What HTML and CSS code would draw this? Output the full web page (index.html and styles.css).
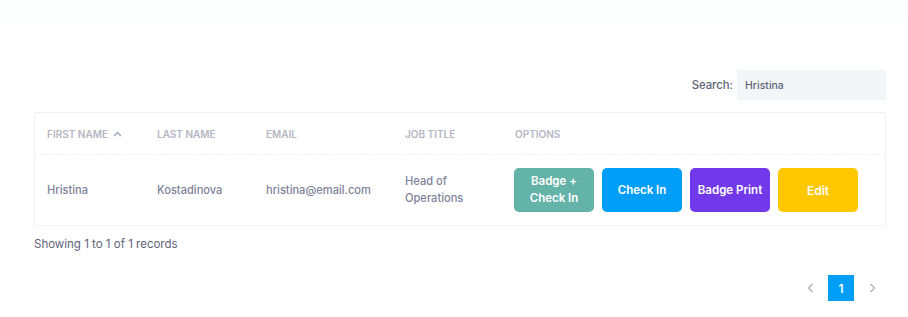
FILE: index.html
```html
<!DOCTYPE html>
<html lang="en">
<head>
  <meta charset="UTF-8">
  <meta name="viewport" content="width=device-width, initial-scale=1.0">
  <title>Attendees</title>
  <link rel="stylesheet" href="styles.css">
</head>
<body>
  <div class="topbar"></div>

  <div class="content">
    <div class="search-row">
      <label for="search">Search:</label>
      <input id="search" type="text" value="Hristina">
    </div>

    <div class="table-box">
      <table>
        <thead>
          <tr>
            <th class="col-first">First Name <span class="sort">
              <svg width="9" height="6" viewBox="0 0 9 6"><path d="M1 5 L4.5 1.5 L8 5" fill="none" stroke="#a1a5b7" stroke-width="1.3"/></svg>
            </span></th>
            <th class="col-last">Last Name</th>
            <th class="col-email">Email</th>
            <th class="col-job">Job Title</th>
            <th>Options</th>
          </tr>
        </thead>
        <tbody>
          <tr>
            <td>Hristina</td>
            <td>Kostadinova</td>
            <td>hristina@email.com</td>
            <td>Head of<br>Operations</td>
            <td>
              <div class="options">
                <button class="btn btn-teal">Badge +<br>Check In</button>
                <button class="btn btn-blue">Check In</button>
                <button class="btn btn-purple">Badge Print</button>
                <button class="btn btn-yellow">Edit</button>
              </div>
            </td>
          </tr>
        </tbody>
      </table>
    </div>

    <div class="info">Showing 1 to 1 of 1 records</div>

    <div class="pager">
      <span class="arrow">
        <svg width="7" height="10" viewBox="0 0 7 10"><path d="M5.5 1 L1.5 5 L5.5 9" fill="none" stroke="#b5b5c3" stroke-width="1.5"/></svg>
      </span>
      <span class="page active">1</span>
      <span class="arrow">
        <svg width="7" height="10" viewBox="0 0 7 10"><path d="M1.5 1 L5.5 5 L1.5 9" fill="none" stroke="#b5b5c3" stroke-width="1.5"/></svg>
      </span>
    </div>
  </div>
</body>
</html>
```

FILE: styles.css
```css
body {
  margin: 0;
  background: #ffffff;
  font-family: Inter, "Liberation Sans", sans-serif;
  font-size: 12px;
  color: #7e8299;
}

.topbar {
  height: 20px;
  background: #fcfdfd;
}

.content {
  padding: 50px 22px 0 34px;
}

.search-row {
  display: flex;
  justify-content: flex-end;
  align-items: center;
  gap: 4px;
}

.search-row label {
  color: #5e6278;
  font-size: 11.3px;
  font-weight: 500;
}

.search-row input {
  width: 149px;
  height: 30px;
  box-sizing: border-box;
  border: none;
  background: #f3f6f9;
  padding: 0 0 0 8px;
  border-radius: 0;
  font-family: inherit;
  font-size: 10.5px;
  font-weight: 500;
  color: #5e6278;
  outline: none;
}

.table-box {
  margin-top: 12px;
  border: 1px solid #eff2f5;
}

table {
  width: 100%;
  border-collapse: collapse;
}

th {
  text-align: left;
  text-transform: uppercase;
  font-size: 10px;
  font-weight: 600;
  color: #b5b5c3;
  height: 41px;
  padding: 0 12px;
  border-bottom: 1px dashed #eff2f5;
  white-space: nowrap;
}

.col-first { width: 86px; }
.col-last { width: 85px; }
.col-email { width: 115px; }
.col-job { width: 86px; }

.sort {
  display: inline-block;
  margin-left: 3px;
  vertical-align: 1px;
}

td {
  height: 70px;
  padding: 0 12px;
  font-size: 11.1px;
  font-weight: 500;
  color: #7e8299;
  line-height: 17px;
}

.options {
  display: flex;
  gap: 8px;
  margin-left: -1px;
}

.btn {
  width: 80px;
  height: 44px;
  border: none;
  border-radius: 5px;
  color: #ffffff;
  font-family: inherit;
  font-size: 11.5px;
  font-weight: 600;
  line-height: 17px;
  padding: 0;
}

.btn-teal { background: #63b3a8; }
.btn-blue { background: #009ef7; }
.btn-purple { background: #7239ea; }
.btn-yellow { background: #ffc700; font-size: 12px; }

.info {
  margin-top: 11px;
  font-size: 11.5px;
  color: #5e6278;
}

.pager {
  display: flex;
  justify-content: flex-end;
  align-items: center;
  margin-top: 24px;
  margin-right: 1px;
}

.arrow {
  display: flex;
  align-items: center;
  justify-content: center;
  width: 26px;
  height: 26px;
}

.page {
  display: flex;
  align-items: center;
  justify-content: center;
  width: 26px;
  height: 26px;
  margin: 0 5px;
  font-size: 12px;
  font-weight: 600;
}

.page.active {
  background: #009ef7;
  color: #ffffff;
}
```
